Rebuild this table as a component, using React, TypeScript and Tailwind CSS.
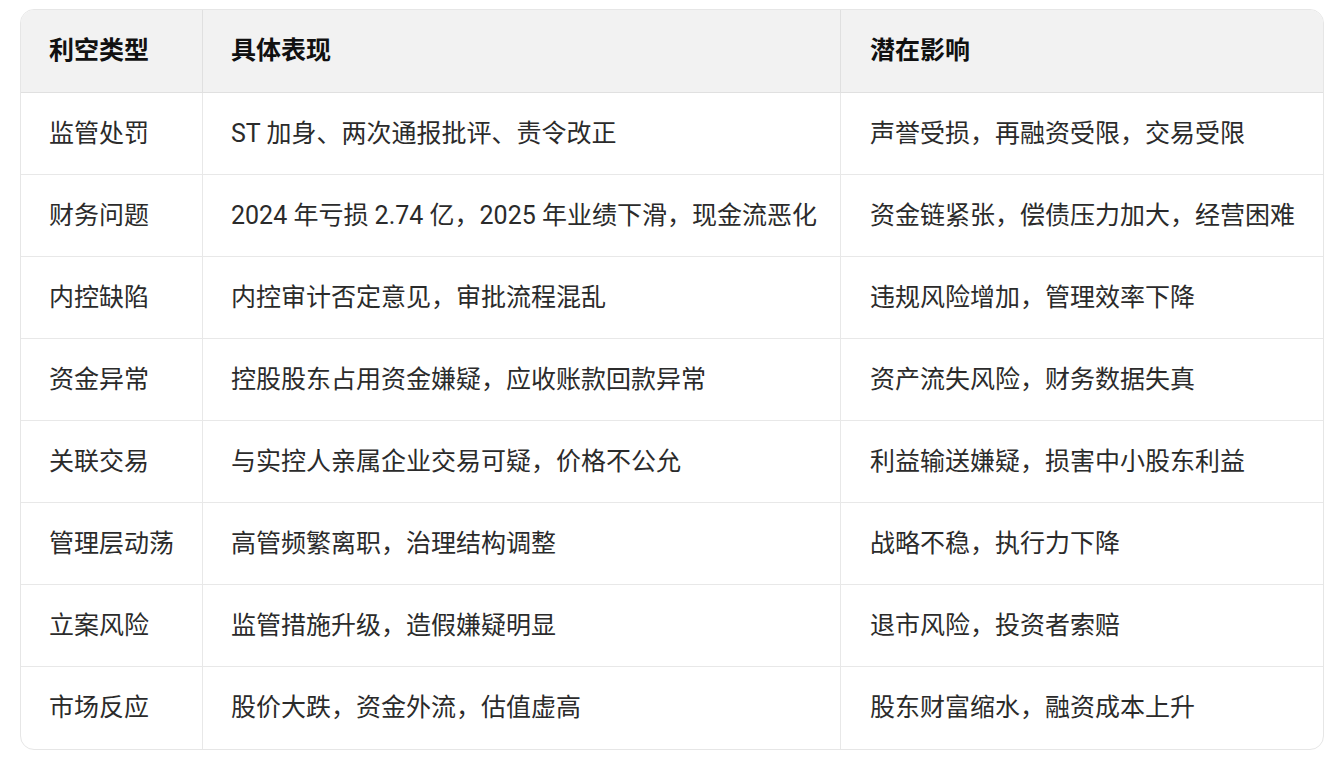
const rows: [string, string, string][] = [
  ['监管处罚', 'ST 加身、两次通报批评、责令改正', '声誉受损，再融资受限，交易受限'],
  ['财务问题', '2024 年亏损 2.74 亿，2025 年业绩下滑，现金流恶化', '资金链紧张，偿债压力加大，经营困难'],
  ['内控缺陷', '内控审计否定意见，审批流程混乱', '违规风险增加，管理效率下降'],
  ['资金异常', '控股股东占用资金嫌疑，应收账款回款异常', '资产流失风险，财务数据失真'],
  ['关联交易', '与实控人亲属企业交易可疑，价格不公允', '利益输送嫌疑，损害中小股东利益'],
  ['管理层动荡', '高管频繁离职，治理结构调整', '战略不稳，执行力下降'],
  ['立案风险', '监管措施升级，造假嫌疑明显', '退市风险，投资者索赔'],
  ['市场反应', '股价大跌，资金外流，估值虚高', '股东财富缩水，融资成本上升'],
]

const App = () => {
  return (
    <div className="min-h-screen bg-white pt-[9px] pl-[20px] font-['Roboto','Noto_Sans_CJK_SC',sans-serif]">
      <div className="w-[1304px] overflow-hidden rounded-[14px] border border-[#e6e6e6]">
        <table className="w-full table-fixed border-separate border-spacing-0 text-left text-[25px]">
          <colgroup>
            <col className="w-[181px]" />
            <col className="w-[638px]" />
            <col />
          </colgroup>
          <thead>
            <tr className="bg-[#f2f2f2]">
              <th className="h-[83px] border-b border-[#e0e0e0] pl-[28px] font-bold text-[#111]">利空类型</th>
              <th className="h-[83px] border-b border-l border-[#e0e0e0] pl-[28px] font-bold text-[#111]">具体表现</th>
              <th className="h-[83px] border-b border-l border-[#e0e0e0] pl-[29px] font-bold text-[#111]">潜在影响</th>
            </tr>
          </thead>
          <tbody>
            {rows.map(([type, detail, impact], i) => {
              const last = i === rows.length - 1
              return (
                <tr key={type}>
                  <td className={`h-[82px] pl-[28px] text-[#2b2b2b] ${last ? '' : 'border-b border-[#e8e8e8]'}`}>{type}</td>
                  <td className={`h-[82px] border-l border-[#e8e8e8] pl-[28px] text-[#2b2b2b] ${last ? '' : 'border-b'}`}>{detail}</td>
                  <td className={`h-[82px] border-l border-[#e8e8e8] pl-[29px] text-[#2b2b2b] ${last ? '' : 'border-b'}`}>{impact}</td>
                </tr>
              )
            })}
          </tbody>
        </table>
      </div>
    </div>
  )
}

export default App
